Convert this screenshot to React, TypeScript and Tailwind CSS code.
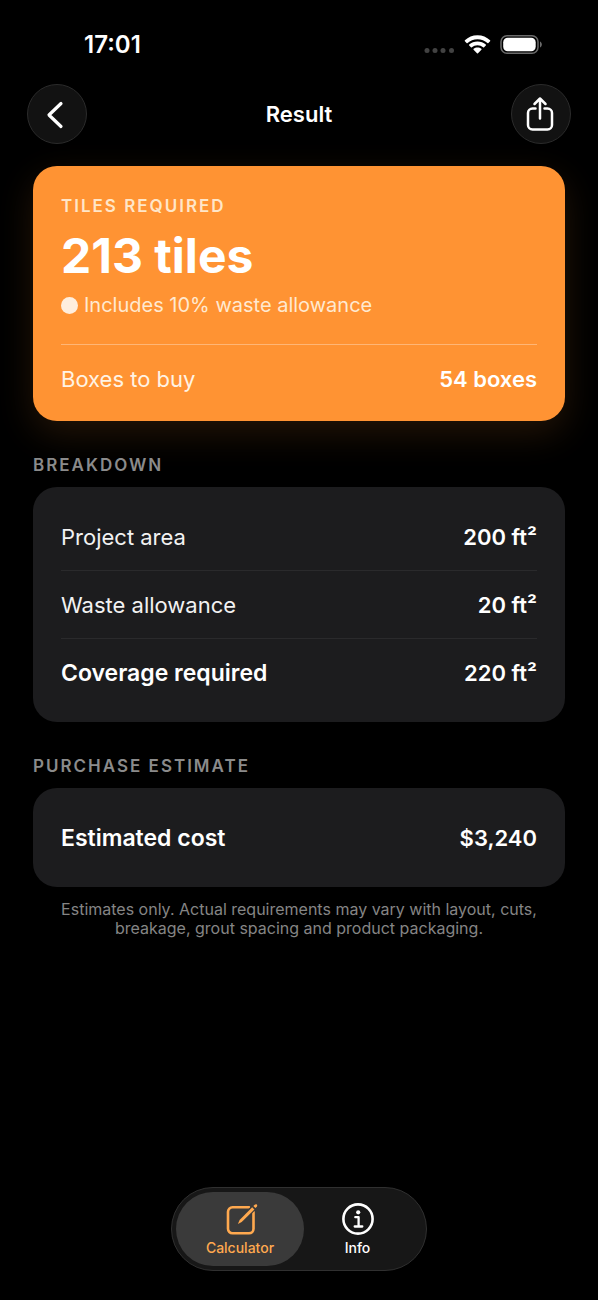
import type { ReactNode } from "react";

type RowProps = { label: string; value: string; strong?: boolean };

const breakdown: RowProps[] = [
  { label: "Project area", value: "200 ft²" },
  { label: "Waste allowance", value: "20 ft²" },
  { label: "Coverage required", value: "220 ft²", strong: true },
];

const purchase: RowProps[] = [{ label: "Estimated cost", value: "$3,240", strong: true }];

function StatusBar() {
  return (
    <div className="flex h-21 items-center justify-between pt-1.5 pr-14 pl-21">
      <span className="text-2xl leading-7 font-semibold">17:01</span>
      <div className="flex items-center gap-2">
        <svg className="mt-3 h-2 w-8" viewBox="0 0 32 8" fill="#424242" aria-hidden="true">
          <circle cx="3" cy="3.500" r="2.500" />
          <circle cx="11" cy="3.500" r="2.500" />
          <circle cx="19" cy="3.500" r="2.500" />
          <circle cx="27.500" cy="3.500" r="2.500" />
        </svg>
        <svg className="h-5 w-[27px]" viewBox="0 0 27 20" fill="white" aria-hidden="true">
          <path d="M13.500.3C8.600.3 4.200 2.200.9 5.300c-.3.300-.3.700 0 1l1.700 1.700c.3.300.7.300 1 0C6.200 5.600 9.600 4.200 13.500 4.200S20.800 5.600 23.400 8c.3.300.7.300 1 0L26.100 6.300c.3-.3.300-.7 0-1C22.800 2.200 18.400.3 13.500.3Z" />
          <path d="M13.500 6.400c-3.200 0-6.100 1.200-8.300 3.200-.3.300-.3.700 0 1l1.700 1.700c.3.300.7.300 1 0 1.500-1.300 3.400-2.100 5.600-2.100s4.100.8 5.600 2.100c.3.300.7.300 1 0l1.700-1.700c.3-.3.300-.7 0-1-2.200-2-5.100-3.200-8.300-3.200Z" />
          <path d="M13.500 12.400c-1.500 0-2.800.5-3.900 1.400-.3.300-.3.700 0 1l3.400 3.400c.3.300.7.300 1 0l3.400-3.400c.3-.3.300-.7 0-1-1.100-.9-2.400-1.400-3.900-1.400Z" />
        </svg>
        <svg className="h-5 w-[43px]" viewBox="0 0 43 20" aria-hidden="true">
          <rect x="2" y="0.800" width="37" height="17.500" rx="6" fill="none" stroke="#6b6b6b" strokeWidth="1.500" />
          <rect x="4.200" y="2.800" width="32.500" height="13.500" rx="4.500" fill="white" />
          <path d="M41 6.500c2.400.8 2.400 5.200 0 6Z" fill="#6b6b6b" />
        </svg>
      </div>
    </div>
  );
}

function RoundButton({ label, children }: { label: string; children: ReactNode }) {
  return (
    <button
      type="button"
      aria-label={label}
      className="flex size-15 items-center justify-center rounded-full border border-[#2b2b2b] bg-[#121212]"
    >
      {children}
    </button>
  );
}

function Row({ label, value, strong }: RowProps) {
  return (
    <div className="flex h-17 items-center justify-between text-[22px] leading-7">
      <dt className={strong ? "text-[23px] font-semibold" : "font-normal text-[#f2f2f2]"}>{label}</dt>
      <dd className="font-semibold">{value}</dd>
    </div>
  );
}

function Section({ title, rows }: { title: string; rows: RowProps[] }) {
  return (
    <section>
      <h2 className="pt-8 pb-2.5 text-[17px] leading-6 font-semibold tracking-[2px] text-[#8b8b8b] uppercase">
        {title}
      </h2>
      <dl className="divide-y divide-[#2a2a2c] rounded-3xl bg-[#1c1c1e] px-7 pt-4 pb-[15px]">
        {rows.map((row) => (
          <Row key={row.label} {...row} />
        ))}
      </dl>
    </section>
  );
}

export default function App() {
  return (
    <div className="flex min-h-screen flex-col bg-black font-['Inter',sans-serif] text-white">
      <StatusBar />
      <header className="flex items-center justify-between px-[27px]">
        <RoundButton label="Back">
          <svg className="size-8" viewBox="0 0 32 32" fill="none" stroke="white" strokeWidth="3.200" strokeLinecap="round" strokeLinejoin="round" aria-hidden="true">
            <path d="M20 5.500 8 17l12 11.500" />
          </svg>
        </RoundButton>
        <h1 className="text-[22px] leading-7 font-semibold">Result</h1>
        <RoundButton label="Share">
          <svg className="h-9 w-8" viewBox="0 0 32 36" fill="none" stroke="white" strokeWidth="2.500" strokeLinecap="round" strokeLinejoin="round" aria-hidden="true">
            <path d="M10.500 12.500H7.500a4.500 4.500 0 0 0-4.500 4.500v12a4.500 4.500 0 0 0 4.500 4.500h15a4.500 4.500 0 0 0 4.500-4.500V17a4.500 4.500 0 0 0-4.500-4.500h-3" />
            <path d="M15 22.500V2.800M9.500 8 15 2.500 20.500 8" />
          </svg>
        </RoundButton>
      </header>

      <main className="px-[33px] pt-[22px]">
        <section className="rounded-3xl bg-[#ff9333] px-7 pt-7 pb-[27px] shadow-[0_12px_36px_rgba(255,147,51,0.14)]">
          <h2 className="text-[17px] leading-6 font-semibold tracking-[2px] text-[#ffe6c8] uppercase">
            Tiles required
          </h2>
          <p className="mt-2.5 text-5xl leading-14 font-bold">213 tiles</p>
          <p className="mt-2 flex items-center gap-1.5 text-xl leading-6.5 text-[#ffe9d0]">
            <span className="size-[17px] rounded-full bg-[#ffeedd]" />
            Includes 10% waste allowance
          </p>
          <div className="mt-6.5 flex items-center justify-between border-t border-[#ffb676] pt-[19px] text-[22px] leading-[30px]">
            <span className="text-[#fff3e4]">Boxes to buy</span>
            <span className="font-semibold">54 boxes</span>
          </div>
        </section>

        <Section title="Breakdown" rows={breakdown} />
        <Section title="Purchase estimate" rows={purchase} />

        <p className="px-5 pt-[13px] text-center text-base leading-[19px] text-[#858585]">
          Estimates only. Actual requirements may vary with layout, cuts, breakage, grout spacing and product packaging.
        </p>
      </main>

      <nav className="mt-auto flex justify-center pt-8 pb-[29px]">
        <div className="flex w-64 rounded-full border border-[#303030] bg-[#171717] p-1 text-sm leading-4 font-medium">
          <a
            href="#calculator"
            aria-current="page"
            className="flex h-[74px] w-32 flex-col items-center gap-1 rounded-full bg-[#3a3a3a] pt-2 text-[#ffa94f]"
          >
            <svg className="size-9" viewBox="0 0 36 36" fill="none" stroke="currentColor" strokeWidth="2.600" strokeLinecap="round" strokeLinejoin="round" aria-hidden="true">
              <path d="M27 7.300H10.500a4.500 4.500 0 0 0-4.500 4.500v17a4.500 4.500 0 0 0 4.500 4.500h16.500a4.500 4.500 0 0 0 4.500-4.500V12" />
              <path d="M18 21.500 31.500 8" stroke="#3a3a3a" strokeWidth="5.500" strokeLinecap="butt" />
              <path d="m15.900 23.900 1.700-4L30.200 7.200l2.200 2.200-12.700 12.700Z" fill="currentColor" stroke="none" />
              <path d="m31.300 6.100 1.400-1.400c.7-.7 1.600-.7 2.100-.1.600.5.600 1.400 0 2.100l-1.400 1.400Z" fill="currentColor" stroke="none" />
            </svg>
            Calculator
          </a>
          <a href="#info" className="flex flex-1 flex-col items-center gap-1 pt-2 pr-[11px]">
            <svg className="size-9" viewBox="0 0 36 36" fill="none" stroke="currentColor" strokeWidth="2.600" strokeLinecap="round" strokeLinejoin="round" aria-hidden="true">
              <circle cx="18" cy="19" r="14.600" />
              <path d="M15.300 17.200h3.300v9.300M14.700 26.500h7.600" strokeWidth="2.300" />
              <circle cx="18.200" cy="12.300" r="2.100" fill="currentColor" stroke="none" />
            </svg>
            Info
          </a>
        </div>
      </nav>
    </div>
  );
}
